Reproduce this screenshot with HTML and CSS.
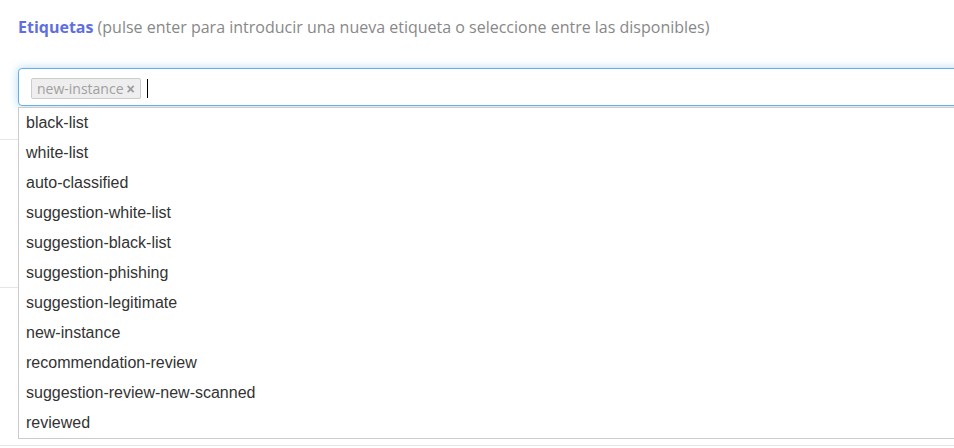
FILE: index.html
```html
<!DOCTYPE html>
<html lang="es">
<head>
<meta charset="utf-8">
<title>Etiquetas</title>
<link rel="stylesheet" href="styles.css">
</head>
<body>
<div class="field">
  <label class="label"><strong>Etiquetas</strong> (pulse enter para introducir una nueva etiqueta o seleccione entre las disponibles)</label>
  <div class="tags-wrap">
    <div class="tags-input">
      <span class="tag">new-instance <span class="tag-x">×</span></span>
      <span class="caret"></span>
    </div>
    <ul class="dropdown">
      <li>black-list</li>
      <li>white-list</li>
      <li>auto-classified</li>
      <li>suggestion-white-list</li>
      <li>suggestion-black-list</li>
      <li>suggestion-phishing</li>
      <li>suggestion-legitimate</li>
      <li>new-instance</li>
      <li>recommendation-review</li>
      <li>suggestion-review-new-scanned</li>
      <li>reviewed</li>
    </ul>
  </div>
  <div class="bg-rows">
    <div class="bg-row r1"></div>
    <div class="bg-row r2"></div>
    <div class="bg-row r3"></div>
  </div>
</div>
</body>
</html>
```
FILE: styles.css
```css
html, body {
  margin: 0;
  padding: 0;
  background: #fff;
}
body {
  width: 954px;
  height: 448px;
  overflow: hidden;
}
.field {
  padding: 15px 0 0 18px;
}
.label {
  display: block;
  font-family: "Open Sans", sans-serif;
  font-size: 16px;
  line-height: 24px;
  color: #888;
}
.label strong {
  color: #5f6fe0;
  font-weight: 700;
}
.tags-wrap {
  position: relative;
  margin-top: 29px;
  z-index: 2;
}
.tags-input {
  box-sizing: border-box;
  height: 38px;
  width: 960px;
  border: 1px solid #66afe9;
  border-radius: 4px 0 0 4px;
  box-shadow: 0 0 8px rgba(102,175,233,0.5);
  display: flex;
  align-items: center;
  padding: 3px 12px 0;
  background: #fff;
}
.tag {
  box-sizing: border-box;
  height: 21px;
  display: inline-flex;
  align-items: center;
  padding: 0 5px 0 5px;
  background: #eee;
  border: 1px solid #ccc;
  border-radius: 2px;
  font-family: "Open Sans", sans-serif;
  font-size: 14px;
  color: #a0a0a0;
}
.tag-x {
  margin-left: 3px;
  font-family: "Liberation Sans", Arial, sans-serif;
  font-weight: 700;
  font-size: 14px;
  color: #999;
}
.caret {
  display: inline-block;
  width: 1px;
  height: 19px;
  background: #000;
  margin-left: 6px;
}
.dropdown {
  position: absolute;
  left: 0;
  top: 39px;
  margin: 0;
  padding: 0;
  list-style: none;
  width: 960px;
  box-sizing: border-box;
  border: 1px solid #ccc;
  background: #fff;
}
.dropdown li {
  height: 30px;
  line-height: 30px;
  padding-left: 7px;
  font-family: "Liberation Sans", Arial, sans-serif;
  font-size: 16px;
  color: #333;
}
.bg-rows {
  position: absolute;
  left: 0;
  top: 0;
  width: 954px;
  z-index: 1;
}
.bg-row {
  position: absolute;
  left: 0;
  width: 954px;
  border-top: 1px solid #e6e6e6;
}
.r1 { top: 139px; }
.r2 { top: 287px; }
.r3 { top: 445px; }
```
